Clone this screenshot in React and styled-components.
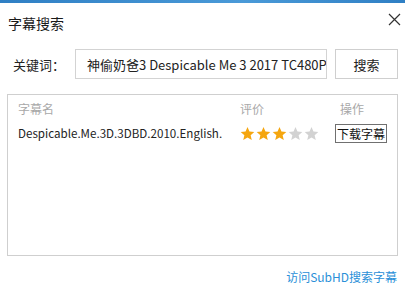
import * as React from "react"
import styled, { createGlobalStyle } from "styled-components"

const Global = createGlobalStyle`
  html, body {
    margin: 0;
    padding: 0;
    background: #ffffff;
  }
  body {
    font-family: "Noto Sans CJK SC", "Noto Sans", sans-serif;
    color: #222;
  }
`

const Dialog = styled.div`
  width: 405px;
  height: 294px;
  display: flex;
  flex-direction: column;
  background: #fff;
  overflow: hidden;
`

const TopStrip = styled.div`
  height: 3px;
  background: linear-gradient(to right, #2f7fc4, #4a9ad8 60%, #2f7fc4);
`

const TitleBar = styled.div`
  display: flex;
  align-items: flex-start;
  justify-content: space-between;
  height: 38px;
  padding: 0 3px 0 8px;
  h1 {
    margin: 10px 0 0;
    font-size: 14px;
    font-weight: 400;
    color: #1a1a1a;
  }
`

const Close = styled.button`
  border: 0;
  background: none;
  padding: 0;
  width: 16px;
  height: 16px;
  margin-top: 8px;
  display: flex;
  align-items: center;
  justify-content: center;
`

const SearchRow = styled.div`
  display: flex;
  align-items: center;
  padding: 8px 7px 0 13px;
  height: 30px;
  label {
    font-size: 13px;
    width: 62px;
    color: #222;
  }
`

const Input = styled.div`
  width: 239px;
  height: 28px;
  border: 1px solid #d3d3d3;
  padding: 0 0 0 11px;
  display: flex;
  align-items: center;
  font-size: 13px;
  white-space: nowrap;
  overflow: hidden;
  color: #222;
`

const Button = styled.button`
  margin-left: 8px;
  width: 63px;
  height: 30px;
  border: 1px solid #cfcfcf;
  background: #fff;
  font-family: inherit;
  font-size: 13px;
  color: #222;
`

const List = styled.div`
  margin: 15px 7px 0 7px;
  height: 160px;
  border: 1px solid #cfcfcf;
  display: flex;
  flex-direction: column;
`

const Row = styled.div`
  display: grid;
  grid-template-columns: 222px 94px 1fr;
  align-items: center;
  padding-left: 10px;
  height: ${(p) => p.$h}px;
  font-size: ${(p) => (p.$head ? 12 : 11.6)}px;
  color: ${(p) => (p.$head ? "#a8a8a8" : "#222")};
`

const HeadCell = styled.span`
  padding-left: ${(p) => p.$indent || 0}px;
`

const Stars = styled.div`
  display: flex;
  gap: 1px;
`

const DownloadBtn = styled.button`
  justify-self: start;
  margin-left: 1px;
  height: 19px;
  width: 52px;
  padding: 0;
  border: 1px solid #707070;
  background: #fff;
  font-family: inherit;
  font-size: 12px;
  color: #111;
  line-height: 17px;
`

const Footer = styled.div`
  display: flex;
  justify-content: flex-end;
  padding: 12px 8px 0 0;
  a {
    font-size: 12px;
    color: #2a8fd8;
    text-decoration: none;
  }
`

const Star = ({ on }) => (
  <svg width="15" height="15" viewBox="0 0 24 24">
    <path
      d="M12 1.5l3.1 7.2 7.8.7-5.9 5.2 1.8 7.7L12 18.2l-6.8 4.1 1.8-7.7-5.9-5.2 7.8-.7z"
      fill={on ? "#f5a60f" : "#d2d2d2"}
    />
  </svg>
)

const subs = [
  { name: "Despicable.Me.3D.3DBD.2010.English.", rating: 3 },
]

const App = () => (
  <Dialog>
    <Global />
    <TopStrip />
    <TitleBar>
      <h1>字幕搜索</h1>
      <Close aria-label="关闭">
        <svg width="13" height="13" viewBox="0 0 13 13">
          <path d="M1 1L12 12M12 1L1 12" stroke="#333" strokeWidth="1.2" />
        </svg>
      </Close>
    </TitleBar>
    <SearchRow>
      <label>关键词：</label>
      <Input>神偷奶爸3 Despicable Me 3 2017 TC480P</Input>
      <Button>搜索</Button>
    </SearchRow>
    <List>
      <Row $head $h={26}>
        <HeadCell>字幕名</HeadCell>
        <HeadCell>评价</HeadCell>
        <HeadCell $indent={6}>操作</HeadCell>
      </Row>
      {subs.map((s) => (
        <Row key={s.name} $h={24}>
          <span>{s.name}</span>
          <Stars>
            {[1, 2, 3, 4, 5].map((i) => (
              <Star key={i} on={i <= s.rating} />
            ))}
          </Stars>
          <DownloadBtn>下载字幕</DownloadBtn>
        </Row>
      ))}
    </List>
    <Footer>
      <a href="#">访问SubHD搜索字幕</a>
    </Footer>
  </Dialog>
)

export default App
